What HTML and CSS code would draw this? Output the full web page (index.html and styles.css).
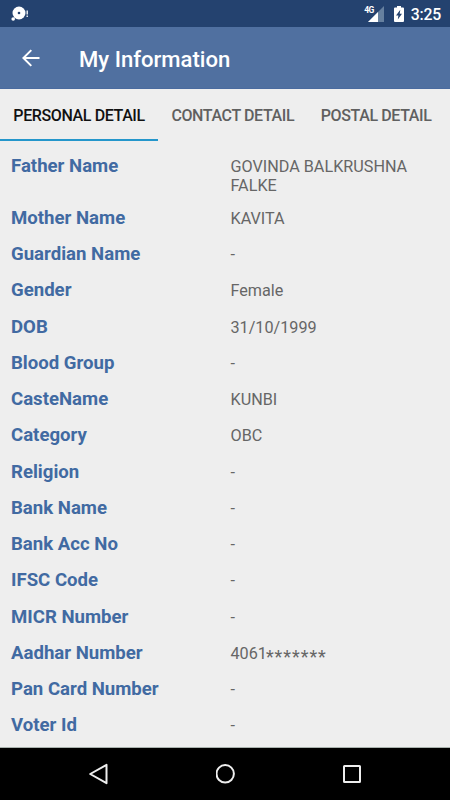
FILE: index.html
```html
<!DOCTYPE html>
<html lang="en">
<head>
  <meta charset="UTF-8">
  <meta name="viewport" content="width=device-width, initial-scale=1.0">
  <title>My Information</title>
  <link rel="stylesheet" href="styles.css">
</head>
<body>

  <!-- Status bar -->
  <div class="status-bar">
    <svg class="notification" width="20" height="20" viewBox="0 0 20 20">
      <circle cx="9" cy="9" r="6.5" fill="#fff"/>
      <circle cx="9" cy="9" r="1.3" fill="#24426f"/>
      <circle cx="3.2" cy="15" r="1.8" fill="#fff"/>
      <path d="M17.2 6.5v4M17.2 11.5v1.5" stroke="#fff" stroke-width="1.3"/>
    </svg>
    <div class="status-icons">
      <span class="network">4G</span>
      <svg class="signal" width="16" height="16" viewBox="0 0 16 16">
        <path d="M16 0v16H0z" fill="#66809f"/>
        <path d="M10 6v10H0z" fill="#fff"/>
      </svg>
      <svg class="battery" width="10" height="16" viewBox="0 0 10 16">
        <path d="M3 0h4v1.5h2q1 0 1 1V15q0 1-1 1H1q-1 0-1-1V2.5q0-1 1-1h2z" fill="#fff"/>
        <path d="M6.3 3.8L2 9.4h2.4L3.8 13.5L8 7.8H5.7z" fill="#24426f"/>
      </svg>
      <span class="time">3:25</span>
    </div>
  </div>

  <!-- Toolbar -->
  <header>
    <svg class="back" width="18" height="18" viewBox="0 0 18 18">
      <path d="M17.5 9H1.5M9.3 1.1L1.4 9l7.9 7.9" fill="none" stroke="#fff" stroke-width="2"/>
    </svg>
    <h1>My Information</h1>
  </header>

  <!-- Tabs -->
  <nav>
    <a class="tab active">PERSONAL DETAIL</a>
    <a class="tab">CONTACT DETAIL</a>
    <a class="tab">POSTAL DETAIL</a>
  </nav>

  <!-- Personal details -->
  <main>
    <div class="row"><b>Father Name</b><span>GOVINDA BALKRUSHNA FALKE</span></div>
    <div class="row"><b>Mother Name</b><span>KAVITA</span></div>
    <div class="row"><b>Guardian Name</b><span>-</span></div>
    <div class="row"><b>Gender</b><span>Female</span></div>
    <div class="row"><b>DOB</b><span>31/10/1999</span></div>
    <div class="row"><b>Blood Group</b><span>-</span></div>
    <div class="row"><b>CasteName</b><span>KUNBI</span></div>
    <div class="row"><b>Category</b><span>OBC</span></div>
    <div class="row"><b>Religion</b><span>-</span></div>
    <div class="row"><b>Bank Name</b><span>-</span></div>
    <div class="row"><b>Bank Acc No</b><span>-</span></div>
    <div class="row"><b>IFSC Code</b><span>-</span></div>
    <div class="row"><b>MICR Number</b><span>-</span></div>
    <div class="row"><b>Aadhar Number</b><span>4061<i class="mask">*******</i></span></div>
    <div class="row"><b>Pan Card Number</b><span>-</span></div>
    <div class="row"><b>Voter Id</b><span>-</span></div>
  </main>

  <!-- Navigation bar -->
  <footer>
    <svg width="20" height="22" viewBox="0 0 20 22">
      <path d="M17.5 1.8v18.4L1.2 11z" fill="none" stroke="#eee" stroke-width="2" stroke-linejoin="round"/>
    </svg>
    <svg width="20" height="20" viewBox="0 0 20 20">
      <circle cx="9.2" cy="9.8" r="8.7" fill="none" stroke="#eee" stroke-width="2"/>
    </svg>
    <svg width="18" height="18" viewBox="0 0 18 18">
      <rect x="1" y="1" width="16" height="16" rx=".5" fill="none" stroke="#eee" stroke-width="2"/>
    </svg>
  </footer>

</body>
</html>
```

FILE: styles.css
```css
* {
  box-sizing: border-box;
}

body {
  display: flex;
  flex-direction: column;
  height: 800px;
  margin: 0;
  overflow: hidden;
  background-color: #eee;
  font-family: Roboto, sans-serif;
}

/* Status bar */
.status-bar {
  display: flex;
  justify-content: space-between;
  height: 27px;
  padding: 4px 9px 0 10px;
  background-color: #24426f;
  color: white;
}

.status-icons {
  display: flex;
}

.network {
  margin: 1px -6px 0 0;
  font-size: 8.5px;
  font-weight: 700;
  line-height: 10px;
  letter-spacing: -0.6px;
}

.signal {
  margin: 2px 10px 0 0;
}

.battery {
  margin: 2px 7px 0 0;
}

.time {
  font-size: 15.8px;
  font-weight: 500;
  line-height: 21px;
  letter-spacing: -0.2px;
}

/* Toolbar */
header {
  display: flex;
  align-items: center;
  height: 62px;
  padding: 0 22px;
  background-color: #5070a0;
  border-bottom: 1px solid #4a6b9f;
  color: white;
}

h1 {
  margin: 3px 0 0 39px;
  font-size: 22.1px;
  font-weight: 500;
}

/* Tabs */
nav {
  display: flex;
  height: 52px;
}

.tab {
  padding: 0 13.3px;
  color: #606060;
  font-size: 16px;
  font-weight: 500;
  line-height: 53px;
  letter-spacing: -0.38px;
  white-space: nowrap;
}

.tab.active {
  border-bottom: 2px solid #2496cb;
  color: #111;
}

/* Details */
main {
  flex: 1;
  padding: 6.9px 11px 0;
  border-bottom: 1px solid #a9b2ad;
}

.row {
  display: flex;
  padding: 7px 0;
}

.row b {
  width: 219.5px;
  color: #416aa2;
  font-size: 18.6px;
  font-weight: 700;
  line-height: 22.25px;
}

.row span {
  width: 200px;
  margin-top: 2px;
  margin-bottom: -2px;
  color: #666;
  font-size: 16.2px;
  line-height: 19px;
}

.mask {
  font-style: normal;
  font-size: 18px;
  line-height: 1px;
  letter-spacing: 0.95px;
  margin-left: -1px;
  vertical-align: -4px;
}

/* Navigation bar */
footer {
  display: flex;
  align-items: center;
  justify-content: space-between;
  height: 52px;
  padding: 0 89px;
  background-color: black;
}
```
